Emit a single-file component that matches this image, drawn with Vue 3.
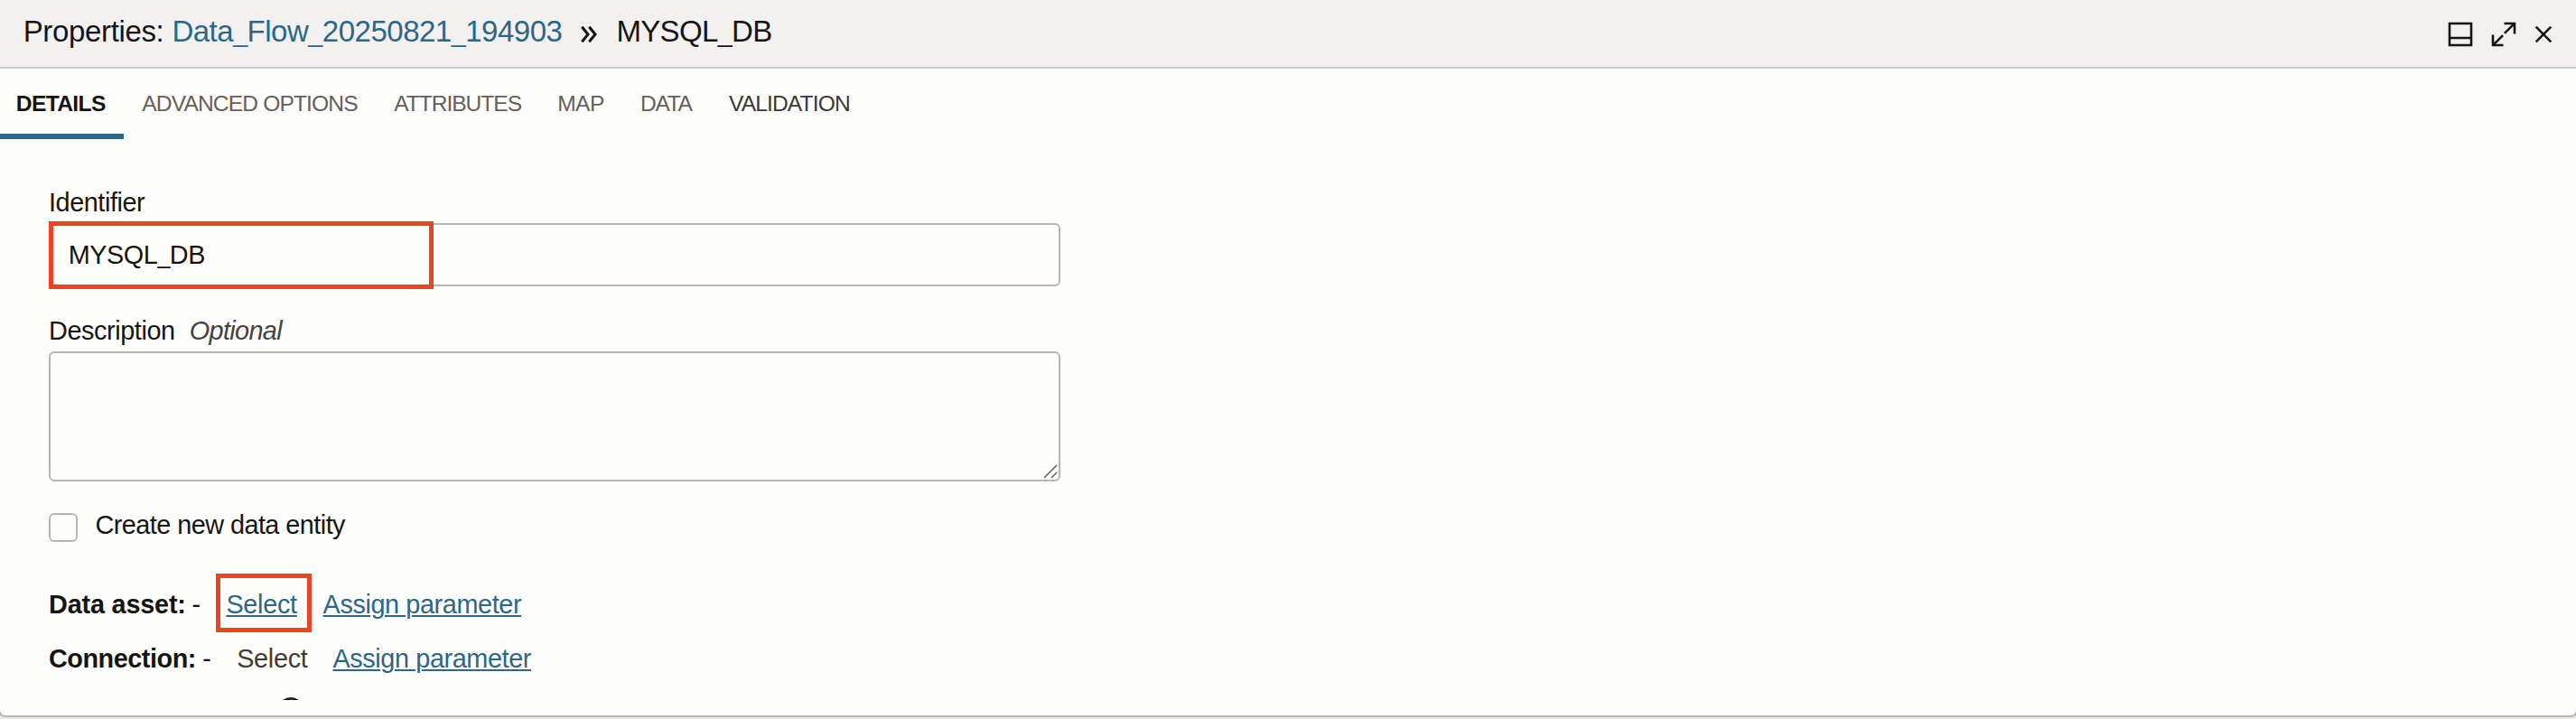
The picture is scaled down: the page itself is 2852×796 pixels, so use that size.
<script setup>
import { ref } from 'vue'

const flowName = ['Data', 'Flow', '20250821', '194903']
const entityName = ['MYSQL', 'DB']
const tabs = [
  { label: 'DETAILS', cls: 'details' },
  { label: 'ADVANCED OPTIONS', cls: 'advanced' },
  { label: 'ATTRIBUTES', cls: 'attributes' },
  { label: 'MAP', cls: 'map' },
  { label: 'DATA', cls: 'data' },
  { label: 'VALIDATION', cls: 'validation' },
]
const active = ref('details')
</script>

<template>
  <div class="page">
    <section class="panel">
      <header class="header">
        <span class="title">Properties:</span>
        <a class="flow"><template v-for="(p, i) in flowName" :key="p"><span v-if="i" class="us">_</span>{{ p }}</template></a>
        <svg class="chevrons" width="20" height="20" viewBox="0 0 20 20">
          <path d="M2.3 1.8 9 10 2.3 18.2M10.3 1.8 17 10l-6.7 8.2" />
        </svg>
        <span class="entity"><template v-for="(p, i) in entityName" :key="p"><span v-if="i" class="us">_</span>{{ p }}</template></span>
        <div class="tools">
          <svg width="28" height="28" viewBox="0 0 28 28">
            <path d="M2 2h24v24H2zM2 18h24" />
          </svg>
          <svg class="expand" width="28" height="28" viewBox="0 0 28 28">
            <path d="M14.9 12.9 26 1.8M14.5 2H26v11.5M13.1 15.1 2 26.2M2 14.5V26h11.5" />
          </svg>
          <svg width="20" height="20" viewBox="0 0 20 20">
            <path d="M1.7 1.7l16.6 16.6M18.3 1.7 1.7 18.3" />
          </svg>
        </div>
      </header>

      <nav class="tabs">
        <button
          v-for="t in tabs"
          :key="t.cls"
          class="tab"
          :class="[t.cls, { active: active === t.cls }]"
          @click="active = t.cls"
        >{{ t.label }}</button>
      </nav>

      <div class="body">
        <div class="label identifier">Identifier</div>
        <div class="input">
          <span class="value"><template v-for="(p, i) in entityName" :key="p"><span v-if="i" class="us">_</span>{{ p }}</template></span>
          <div class="mark mark-input"></div>
        </div>

        <div class="label description">Description <em>Optional</em></div>
        <div class="textarea">
          <svg class="grip" width="16" height="16" viewBox="0 0 16 16">
            <path d="M1 15 15 1M9 15l6-6" />
          </svg>
        </div>

        <div class="check">
          <span class="box"></span>
          <span class="check-label">Create new data entity</span>
        </div>

        <div class="row asset">
          <strong>Data asset:</strong>
          <span class="dash">-</span>
          <span class="pick"><a class="select">Select</a><span class="mark mark-select"></span></span>
          <a class="assign">Assign parameter</a>
        </div>
        <div class="row connection">
          <strong>Connection:</strong>
          <span class="dash">-</span>
          <span class="pick select disabled">Select</span>
          <a class="assign">Assign parameter</a>
        </div>
        <svg class="info" width="28" height="3" viewBox="0 0 28 3">
          <circle cx="14" cy="15" r="13.6" />
        </svg>
      </div>
    </section>
  </div>
</template>

<style>
body {
  margin: 0;
  background: #e9e9ec;
}
</style>

<style scoped>
.page {
  width: 2852px;
  height: 796px;
  overflow: hidden;
  font-family: "Liberation Sans", Arial, sans-serif;
  color: #161513;
}
.panel {
  box-sizing: border-box;
  height: 794px;
  margin: 0 -2px;
  overflow: hidden;
  background: #fdfdfb;
  border: 2px solid #bbb5b0;
  border-top: 0;
  border-radius: 0 0 8px 8px;
}
.header {
  box-sizing: border-box;
  display: flex;
  height: 76px;
  padding-left: 25.7px;
  background: #f3f1f0;
  border-bottom: 2px solid #c9c9d2;
  font-size: 33px;
  line-height: 70px;
  white-space: nowrap;
}
.title {
  width: 164.7px;
  letter-spacing: -0.35px;
}
.flow {
  width: 452px;
  color: #2c6789;
  letter-spacing: -0.49px;
}
.us {
  font-size: 0.87em;
}
svg {
  display: block;
  flex: none;
  fill: none;
  stroke: #161513;
  stroke-width: 2.6;
}
.chevrons {
  margin: 28px 20.5px 0 -0.5px;
  stroke-width: 3;
}
.entity {
  letter-spacing: -0.65px;
}
.tools {
  display: flex;
  align-items: center;
  height: 76px;
  margin-left: auto;
  margin-right: 26px;
}
.tools svg {
  stroke-width: 2.6;
}
.expand {
  margin: 0 20px;
}
.tabs {
  display: flex;
  height: 78px;
}
.tab {
  flex: none;
  height: 78px;
  padding: 0 0 1px;
  border: 0;
  background: none;
  color: #665f5b;
  font: 24.6px/77px "Liberation Sans", Arial, sans-serif;
  text-align: left;
  white-space: nowrap;
}
.details {
  width: 137px;
  margin-right: 20.3px;
  padding-left: 17.8px;
  letter-spacing: -0.65px;
}
.active {
  color: #161513;
  font-weight: 700;
  box-shadow: inset 0 -6px #2c6789;
}
.advanced {
  width: 279px;
  letter-spacing: -0.87px;
}
.attributes {
  width: 180.9px;
  letter-spacing: -1.05px;
}
.map {
  width: 91.8px;
  letter-spacing: -0.6px;
}
.data {
  width: 98px;
  letter-spacing: -1.3px;
}
.validation {
  color: #3b3835;
  letter-spacing: -0.88px;
}
.body {
  padding: 54px 0 0 54px;
  font-size: 28.8px;
  line-height: 32px;
  white-space: nowrap;
}
.label {
  margin-bottom: 7px;
}
.identifier {
  letter-spacing: -0.42px;
}
.description {
  letter-spacing: -0.4px;
}
.description em {
  margin-left: 8.6px;
  color: #45423f;
  letter-spacing: -0.65px;
}
.input,
.textarea {
  position: relative;
  box-sizing: border-box;
  width: 1120px;
  border: 2px solid #bbb5b0;
  border-radius: 6px;
}
.input {
  height: 70px;
  margin-bottom: 33px;
  padding-left: 19.8px;
  line-height: 66px;
  letter-spacing: -0.45px;
}
.mark {
  position: absolute;
  box-sizing: border-box;
  border: 5px solid #ec4327;
}
.mark-input {
  left: -2px;
  top: -4px;
  width: 426px;
  height: 75px;
}
.textarea {
  height: 144px;
  margin-bottom: 32px;
}
.grip {
  position: absolute;
  right: 1px;
  bottom: 1px;
  stroke: #5e5e5e;
  stroke-width: 1.5;
}
.check {
  display: flex;
  height: 35px;
}
.box {
  box-sizing: border-box;
  width: 32px;
  height: 32px;
  margin: 3px 19.5px 0 0;
  border: 2px solid #bbb5b0;
  border-radius: 6px;
}
.check-label {
  letter-spacing: -0.53px;
}
.row {
  display: flex;
  height: 32px;
}
.asset {
  margin-top: 53px;
}
.connection {
  margin-top: 28px;
}
.asset strong {
  width: 158.4px;
  letter-spacing: -0.17px;
}
.connection strong {
  width: 170.2px;
  letter-spacing: -0.46px;
}
.dash {
  width: 38px;
}
.pick {
  position: relative;
  width: 107.2px;
}
.connection .pick {
  width: 106.3px;
}
a.select,
.assign {
  color: #2c6789;
  text-decoration: underline;
  text-decoration-thickness: 2px;
  text-underline-offset: 2px;
}
.select {
  letter-spacing: -0.27px;
}
.assign {
  letter-spacing: -0.38px;
}
.disabled {
  color: #403c38;
}
.mark-select {
  left: -11.4px;
  top: -18px;
  width: 106px;
  height: 65px;
}
.info {
  margin: 27px 0 0 254px;
}
</style>
